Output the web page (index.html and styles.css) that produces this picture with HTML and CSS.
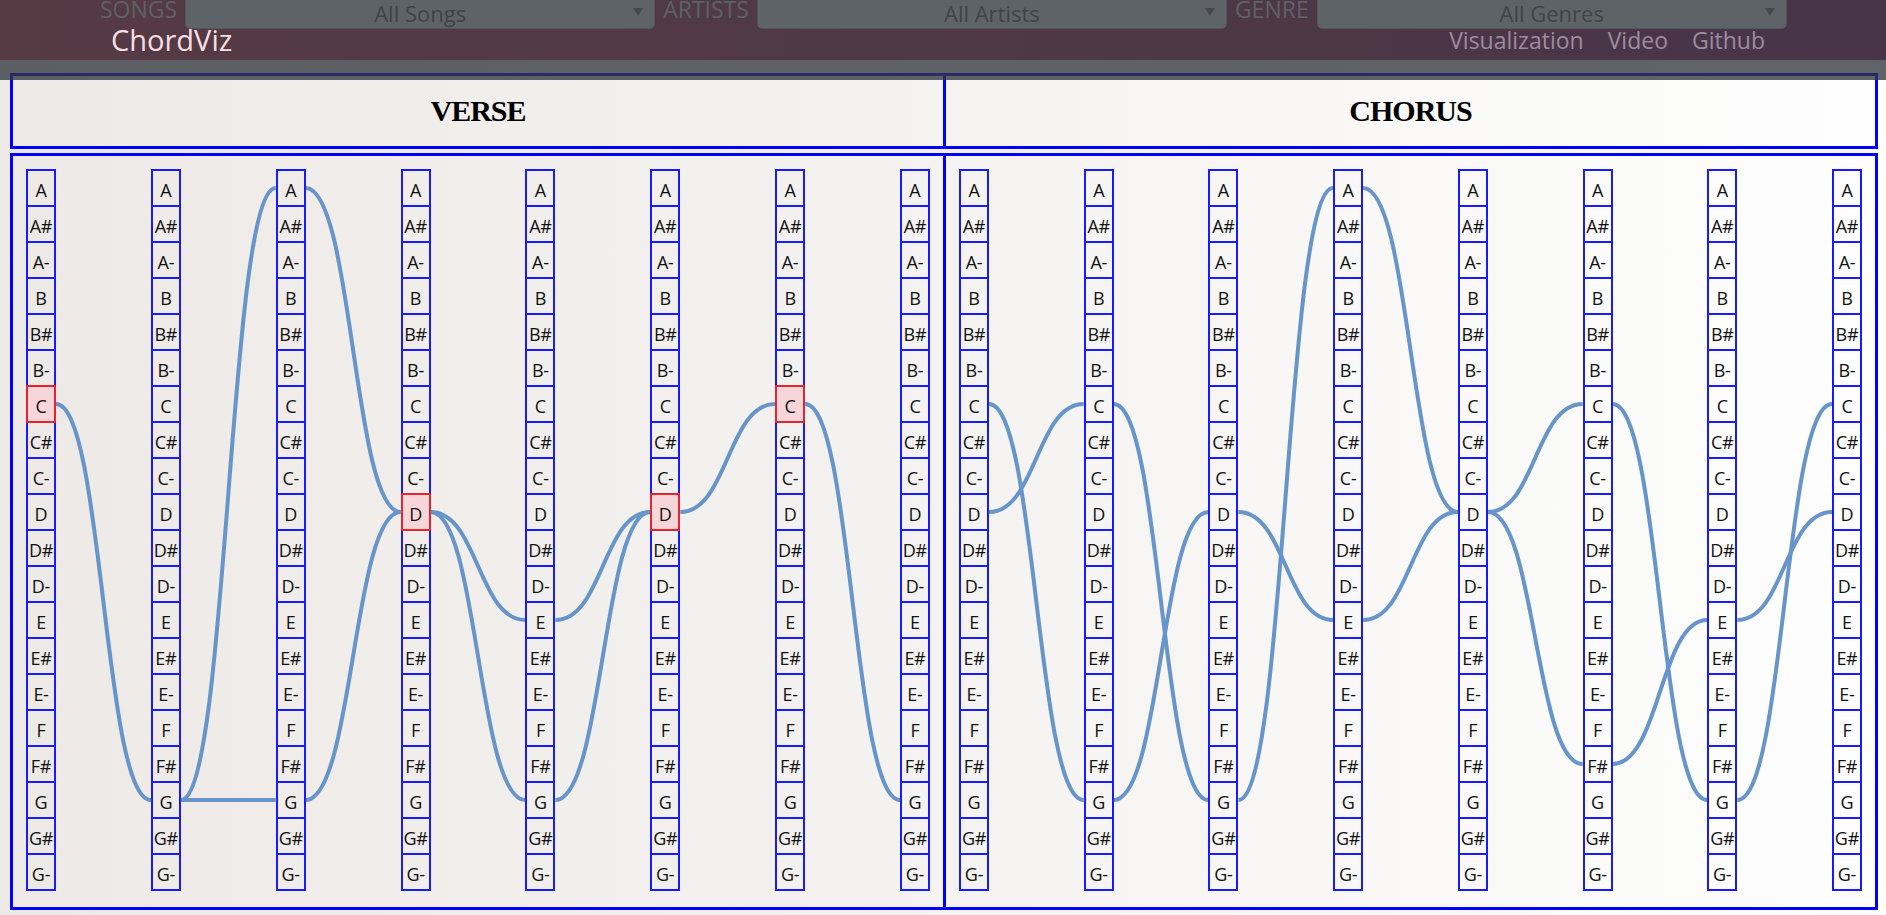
FILE: index.html
```html
<!DOCTYPE html>
<html lang="en">
<head>
<meta charset="utf-8">
<title>ChordViz</title>
<link rel="stylesheet" href="styles.css">
</head>
<body>
<header class="topbar">
  <form class="filters">
    <span class="flabel">Songs</span>
    <div class="select">All Songs</div>
    <span class="flabel">Artists</span>
    <div class="select">All Artists</div>
    <span class="flabel">Genre</span>
    <div class="select">All Genres</div>
  </form>
  <a class="brand">ChordViz</a>
  <nav class="navlinks">
    <a>Visualization</a>
    <a>Video</a>
    <a>Github</a>
  </nav>
</header>
<div class="dim"></div>
<main class="board">
  <div class="titles">
    <div class="title">VERSE</div>
    <div class="title">CHORUS</div>
  </div>
  <div class="charts">
    <section class="chart">
      <div class="cols">
        <svg class="links" xmlns="http://www.w3.org/2000/svg">
          <g fill="none" stroke="#6795ca" stroke-width="4">
            <path d="M30 235C77.4 235 77.4 631 124.9 631"/>
            <path d="M154.9 631L249.7 631"/>
            <path d="M154.9 631C202.3 631 202.3 19 249.7 19"/>
            <path d="M279.7 19C327.1 19 327.1 343 374.6 343"/>
            <path d="M279.7 631C327.1 631 327.1 343 374.6 343"/>
            <path d="M404.6 343C452 343 452 451 499.4 451"/>
            <path d="M404.6 343C452 343 452 631 499.4 631"/>
            <path d="M529.4 451C576.9 451 576.9 343 624.3 343"/>
            <path d="M529.4 631C576.9 631 576.9 343 624.3 343"/>
            <path d="M654.3 343C701.7 343 701.7 235 749.1 235"/>
            <path d="M779.1 235C826.6 235 826.6 631 874 631"/>
          </g>
        </svg>
        <div class="col"><div class="n">A</div><div class="n">A#</div><div class="n">A-</div><div class="n">B</div><div class="n">B#</div><div class="n">B-</div><div class="n hl">C</div><div class="n">C#</div><div class="n">C-</div><div class="n">D</div><div class="n">D#</div><div class="n">D-</div><div class="n">E</div><div class="n">E#</div><div class="n">E-</div><div class="n">F</div><div class="n">F#</div><div class="n">G</div><div class="n">G#</div><div class="n">G-</div></div>
        <div class="col"><div class="n">A</div><div class="n">A#</div><div class="n">A-</div><div class="n">B</div><div class="n">B#</div><div class="n">B-</div><div class="n">C</div><div class="n">C#</div><div class="n">C-</div><div class="n">D</div><div class="n">D#</div><div class="n">D-</div><div class="n">E</div><div class="n">E#</div><div class="n">E-</div><div class="n">F</div><div class="n">F#</div><div class="n">G</div><div class="n">G#</div><div class="n">G-</div></div>
        <div class="col"><div class="n">A</div><div class="n">A#</div><div class="n">A-</div><div class="n">B</div><div class="n">B#</div><div class="n">B-</div><div class="n">C</div><div class="n">C#</div><div class="n">C-</div><div class="n">D</div><div class="n">D#</div><div class="n">D-</div><div class="n">E</div><div class="n">E#</div><div class="n">E-</div><div class="n">F</div><div class="n">F#</div><div class="n">G</div><div class="n">G#</div><div class="n">G-</div></div>
        <div class="col"><div class="n">A</div><div class="n">A#</div><div class="n">A-</div><div class="n">B</div><div class="n">B#</div><div class="n">B-</div><div class="n">C</div><div class="n">C#</div><div class="n">C-</div><div class="n hl">D</div><div class="n">D#</div><div class="n">D-</div><div class="n">E</div><div class="n">E#</div><div class="n">E-</div><div class="n">F</div><div class="n">F#</div><div class="n">G</div><div class="n">G#</div><div class="n">G-</div></div>
        <div class="col"><div class="n">A</div><div class="n">A#</div><div class="n">A-</div><div class="n">B</div><div class="n">B#</div><div class="n">B-</div><div class="n">C</div><div class="n">C#</div><div class="n">C-</div><div class="n">D</div><div class="n">D#</div><div class="n">D-</div><div class="n">E</div><div class="n">E#</div><div class="n">E-</div><div class="n">F</div><div class="n">F#</div><div class="n">G</div><div class="n">G#</div><div class="n">G-</div></div>
        <div class="col"><div class="n">A</div><div class="n">A#</div><div class="n">A-</div><div class="n">B</div><div class="n">B#</div><div class="n">B-</div><div class="n">C</div><div class="n">C#</div><div class="n">C-</div><div class="n hl">D</div><div class="n">D#</div><div class="n">D-</div><div class="n">E</div><div class="n">E#</div><div class="n">E-</div><div class="n">F</div><div class="n">F#</div><div class="n">G</div><div class="n">G#</div><div class="n">G-</div></div>
        <div class="col"><div class="n">A</div><div class="n">A#</div><div class="n">A-</div><div class="n">B</div><div class="n">B#</div><div class="n">B-</div><div class="n hl">C</div><div class="n">C#</div><div class="n">C-</div><div class="n">D</div><div class="n">D#</div><div class="n">D-</div><div class="n">E</div><div class="n">E#</div><div class="n">E-</div><div class="n">F</div><div class="n">F#</div><div class="n">G</div><div class="n">G#</div><div class="n">G-</div></div>
        <div class="col"><div class="n">A</div><div class="n">A#</div><div class="n">A-</div><div class="n">B</div><div class="n">B#</div><div class="n">B-</div><div class="n">C</div><div class="n">C#</div><div class="n">C-</div><div class="n">D</div><div class="n">D#</div><div class="n">D-</div><div class="n">E</div><div class="n">E#</div><div class="n">E-</div><div class="n">F</div><div class="n">F#</div><div class="n">G</div><div class="n">G#</div><div class="n">G-</div></div>
      </div>
    </section>
    <section class="chart">
      <div class="cols">
        <svg class="links" xmlns="http://www.w3.org/2000/svg">
          <g fill="none" stroke="#6795ca" stroke-width="4">
            <path d="M30 235C77.4 235 77.4 631 124.7 631"/>
            <path d="M30 343C77.4 343 77.4 235 124.7 235"/>
            <path d="M154.7 235C202.1 235 202.1 631 249.4 631"/>
            <path d="M154.7 631C202.1 631 202.1 343 249.4 343"/>
            <path d="M279.4 343C326.8 343 326.8 451 374.1 451"/>
            <path d="M279.4 631C326.8 631 326.8 19 374.1 19"/>
            <path d="M404.1 19C451.5 19 451.5 343 498.9 343"/>
            <path d="M404.1 451C451.5 451 451.5 343 498.9 343"/>
            <path d="M528.9 343C576.2 343 576.2 235 623.6 235"/>
            <path d="M528.9 343C576.2 343 576.2 595 623.6 595"/>
            <path d="M653.6 235C700.9 235 700.9 631 748.3 631"/>
            <path d="M653.6 595C700.9 595 700.9 451 748.3 451"/>
            <path d="M778.3 451C825.6 451 825.6 343 873 343"/>
            <path d="M778.3 631C825.6 631 825.6 235 873 235"/>
          </g>
        </svg>
        <div class="col"><div class="n">A</div><div class="n">A#</div><div class="n">A-</div><div class="n">B</div><div class="n">B#</div><div class="n">B-</div><div class="n">C</div><div class="n">C#</div><div class="n">C-</div><div class="n">D</div><div class="n">D#</div><div class="n">D-</div><div class="n">E</div><div class="n">E#</div><div class="n">E-</div><div class="n">F</div><div class="n">F#</div><div class="n">G</div><div class="n">G#</div><div class="n">G-</div></div>
        <div class="col"><div class="n">A</div><div class="n">A#</div><div class="n">A-</div><div class="n">B</div><div class="n">B#</div><div class="n">B-</div><div class="n">C</div><div class="n">C#</div><div class="n">C-</div><div class="n">D</div><div class="n">D#</div><div class="n">D-</div><div class="n">E</div><div class="n">E#</div><div class="n">E-</div><div class="n">F</div><div class="n">F#</div><div class="n">G</div><div class="n">G#</div><div class="n">G-</div></div>
        <div class="col"><div class="n">A</div><div class="n">A#</div><div class="n">A-</div><div class="n">B</div><div class="n">B#</div><div class="n">B-</div><div class="n">C</div><div class="n">C#</div><div class="n">C-</div><div class="n">D</div><div class="n">D#</div><div class="n">D-</div><div class="n">E</div><div class="n">E#</div><div class="n">E-</div><div class="n">F</div><div class="n">F#</div><div class="n">G</div><div class="n">G#</div><div class="n">G-</div></div>
        <div class="col"><div class="n">A</div><div class="n">A#</div><div class="n">A-</div><div class="n">B</div><div class="n">B#</div><div class="n">B-</div><div class="n">C</div><div class="n">C#</div><div class="n">C-</div><div class="n">D</div><div class="n">D#</div><div class="n">D-</div><div class="n">E</div><div class="n">E#</div><div class="n">E-</div><div class="n">F</div><div class="n">F#</div><div class="n">G</div><div class="n">G#</div><div class="n">G-</div></div>
        <div class="col"><div class="n">A</div><div class="n">A#</div><div class="n">A-</div><div class="n">B</div><div class="n">B#</div><div class="n">B-</div><div class="n">C</div><div class="n">C#</div><div class="n">C-</div><div class="n">D</div><div class="n">D#</div><div class="n">D-</div><div class="n">E</div><div class="n">E#</div><div class="n">E-</div><div class="n">F</div><div class="n">F#</div><div class="n">G</div><div class="n">G#</div><div class="n">G-</div></div>
        <div class="col"><div class="n">A</div><div class="n">A#</div><div class="n">A-</div><div class="n">B</div><div class="n">B#</div><div class="n">B-</div><div class="n">C</div><div class="n">C#</div><div class="n">C-</div><div class="n">D</div><div class="n">D#</div><div class="n">D-</div><div class="n">E</div><div class="n">E#</div><div class="n">E-</div><div class="n">F</div><div class="n">F#</div><div class="n">G</div><div class="n">G#</div><div class="n">G-</div></div>
        <div class="col"><div class="n">A</div><div class="n">A#</div><div class="n">A-</div><div class="n">B</div><div class="n">B#</div><div class="n">B-</div><div class="n">C</div><div class="n">C#</div><div class="n">C-</div><div class="n">D</div><div class="n">D#</div><div class="n">D-</div><div class="n">E</div><div class="n">E#</div><div class="n">E-</div><div class="n">F</div><div class="n">F#</div><div class="n">G</div><div class="n">G#</div><div class="n">G-</div></div>
        <div class="col"><div class="n">A</div><div class="n">A#</div><div class="n">A-</div><div class="n">B</div><div class="n">B#</div><div class="n">B-</div><div class="n">C</div><div class="n">C#</div><div class="n">C-</div><div class="n">D</div><div class="n">D#</div><div class="n">D-</div><div class="n">E</div><div class="n">E#</div><div class="n">E-</div><div class="n">F</div><div class="n">F#</div><div class="n">G</div><div class="n">G#</div><div class="n">G-</div></div>
      </div>
    </section>
  </div>
</main>
</body>
</html>
```

FILE: styles.css
```css
html, body {
  margin: 0;
  padding: 0;
}

body {
  position: relative;
  min-height: 100vh;
  font-family: "Open Sans", "Noto Sans", sans-serif;
  background: linear-gradient(to right, #ede9e6 0%, #f4f3f1 50%, #fefefe 100%);
  overflow: hidden;
}

/* ---------- top bar ---------- */
.topbar {
  position: relative;
  height: 60px;
  box-sizing: border-box;
  padding: 0 121px 9px 111px;
  display: flex;
  align-items: flex-end;
  justify-content: space-between;
  background: linear-gradient(to right, #563a44 0%, #4f3947 50%, #483448 100%);
}

.filters {
  position: absolute;
  top: -12px;
  left: 100px;
  margin: 0;
  display: flex;
  align-items: center;
  gap: 8px;
}

.flabel {
  font-size: 23px;
  line-height: 26px;
  color: #5d6166;
  text-transform: uppercase;
  margin-top: 1px;
}

.select {
  position: relative;
  width: 470px;
  height: 41px;
  box-sizing: border-box;
  padding-bottom: 2px;
  display: flex;
  align-items: flex-end;
  justify-content: center;
  background: #5e6367;
  border: 1px solid #52565a;
  border-radius: 5px;
  font-size: 22px;
  line-height: 26px;
  color: #3f4448;
}

.select::after {
  content: "";
  position: absolute;
  right: 11px;
  top: 19px;
  border-left: 5px solid transparent;
  border-right: 5px solid transparent;
  border-top: 8px solid #45494d;
}

.brand {
  font-size: 29px;
  line-height: 22px;
  color: #f6dfe2;
  text-decoration: none;
}

.navlinks {
  display: flex;
  gap: 24px;
  margin-bottom: 2px;
}

.navlinks a {
  font-size: 23px;
  line-height: 18px;
  color: #9d8b9f;
  text-decoration: none;
}

.dim {
  position: absolute;
  top: 60px;
  left: 0;
  right: 0;
  height: 20px;
  background: rgba(51, 55, 62, 0.78);
  z-index: 5;
}

/* ---------- board ---------- */
.board {
  padding: 13px 8px 0 10px;
}

.titles {
  display: grid;
  grid-template-columns: 930px 1fr;
  height: 76px;
  box-sizing: border-box;
  border: 3px solid #0000ff;
}

.title {
  display: flex;
  align-items: center;
  justify-content: center;
  font-family: "Liberation Serif", "Times New Roman", serif;
  font-weight: bold;
  font-size: 30px;
  letter-spacing: -1px;
  color: #000;
}

.title + .title {
  border-left: 3px solid #0000ff;
}

.charts {
  margin-top: 4px;
  display: grid;
  grid-template-columns: 930px 1fr;
  border: 3px solid #0000ff;
}

.chart {
  padding: 13px 13px 16px;
}

.chart + .chart {
  border-left: 3px solid #0000ff;
}

.cols {
  position: relative;
  display: flex;
  justify-content: space-between;
  align-items: flex-start;
}

.links {
  position: absolute;
  left: 0;
  top: 0;
  width: 100%;
  height: 100%;
  overflow: visible;
}

.col {
  position: relative;
  width: 30px;
  box-sizing: border-box;
  border: 1px solid #1a1aff;
}

.n {
  height: 36px;
  box-sizing: border-box;
  border: 1px solid #1a1aff;
  padding-top: 3px;
  display: flex;
  align-items: center;
  justify-content: center;
  font-size: 18px;
  letter-spacing: -0.3px;
  color: #111;
  white-space: nowrap;
}

.n.hl {
  position: relative;
  border-color: #e8232f;
  background: #f7d6da;
  box-shadow: 0 0 0 1px #e8232f;
}
```
